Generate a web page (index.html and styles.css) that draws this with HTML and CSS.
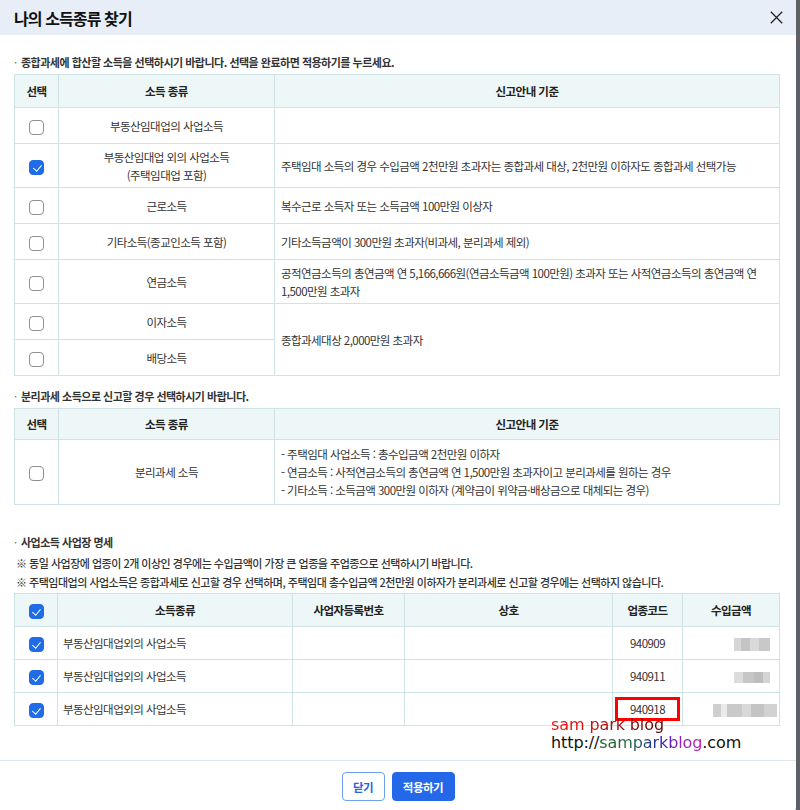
FILE: index.html
```html
<!DOCTYPE html>
<html lang="ko">
<head>
<meta charset="utf-8">
<title>나의 소득종류 찾기</title>
<link rel="stylesheet" href="styles.css">
</head>
<body>
<div class="dialog">
  <div class="dlg-head">
    <h1 class="dlg-title">나의 소득종류 찾기</h1>
    <button class="dlg-close" aria-label="닫기">
      <svg width="13" height="13" viewBox="0 0 13 13"><path d="M0.8 0.8L12.2 12.2M12.2 0.8L0.8 12.2" stroke="#222" stroke-width="1.3" fill="none"/></svg>
    </button>
  </div>

  <div class="dlg-body">
    <p class="sec-title">종합과세에 합산할 소득을 선택하시기 바랍니다. 선택을 완료하면 적용하기를 누르세요.</p>
    <table class="grid t1">
      <colgroup><col class="w-sel"><col class="w-kind"><col class="w-desc"></colgroup>
      <thead>
        <tr><th>선택</th><th>소득 종류</th><th>신고안내 기준</th></tr>
      </thead>
      <tbody>
        <tr><td class="ctr"><span class="cb"></span></td><td class="ctr">부동산임대업의 사업소득</td><td></td></tr>
        <tr><td class="ctr"><span class="cb on"></span></td><td class="ctr">부동산임대업 외의 사업소득<br>(주택임대업 포함)</td><td>주택임대 소득의 경우 수입금액 2천만원 초과자는 종합과세 대상, 2천만원 이하자도 종합과세 선택가능</td></tr>
        <tr><td class="ctr"><span class="cb"></span></td><td class="ctr">근로소득</td><td>복수근로 소득자 또는 소득금액 100만원 이상자</td></tr>
        <tr><td class="ctr"><span class="cb"></span></td><td class="ctr">기타소득(종교인소득 포함)</td><td>기타소득금액이 300만원 초과자(비과세, 분리과세 제외)</td></tr>
        <tr><td class="ctr"><span class="cb"></span></td><td class="ctr">연금소득</td><td>공적연금소득의 총연금액 연 5,166,666원(연금소득금액 100만원) 초과자 또는 사적연금소득의 총연금액 연 1,500만원 초과자</td></tr>
        <tr><td class="ctr"><span class="cb"></span></td><td class="ctr">이자소득</td><td rowspan="2">종합과세대상 2,000만원 초과자</td></tr>
        <tr><td class="ctr"><span class="cb"></span></td><td class="ctr">배당소득</td></tr>
      </tbody>
    </table>

    <p class="sec-title sec-2">분리과세 소득으로 신고할 경우 선택하시기 바랍니다.</p>
    <table class="grid t2">
      <colgroup><col class="w-sel"><col class="w-kind"><col class="w-desc"></colgroup>
      <thead>
        <tr><th>선택</th><th>소득 종류</th><th>신고안내 기준</th></tr>
      </thead>
      <tbody>
        <tr>
          <td class="ctr"><span class="cb"></span></td>
          <td class="ctr">분리과세 소득</td>
          <td>- 주택임대 사업소득 : 총수입금액 2천만원 이하자<br>- 연금소득 : 사적연금소득의 총연금액 연 1,500만원 초과자이고 분리과세를 원하는 경우<br>- 기타소득 : 소득금액 300만원 이하자 (계약금이 위약금·배상금으로 대체되는 경우)</td>
        </tr>
      </tbody>
    </table>

    <p class="sec-title sec-3">사업소득 사업장 명세</p>
    <p class="note note-1">※ 동일 사업장에 업종이 2개 이상인 경우에는 수입금액이 가장 큰 업종을 주업종으로 선택하시기 바랍니다.</p>
    <p class="note">※ 주택임대업의 사업소득은 종합과세로 신고할 경우 선택하며, 주택임대 총수입금액 2천만원 이하자가 분리과세로 신고할 경우에는 선택하지 않습니다.</p>
    <table class="grid t3">
      <colgroup><col class="w3-sel"><col class="w3-kind"><col class="w3-reg"><col class="w3-name"><col class="w3-code"><col class="w3-amt"></colgroup>
      <thead>
        <tr><th><span class="cb on"></span></th><th>소득종류</th><th>사업자등록번호</th><th>상호</th><th>업종코드</th><th>수입금액</th></tr>
      </thead>
      <tbody>
        <tr><td class="ctr"><span class="cb on"></span></td><td>부동산임대업외의 사업소득</td><td></td><td></td><td class="ctr code">940909</td><td class="amt"><span class="blur b1"></span></td></tr>
        <tr><td class="ctr"><span class="cb on"></span></td><td>부동산임대업외의 사업소득</td><td></td><td></td><td class="ctr code">940911</td><td class="amt"><span class="blur b2"></span></td></tr>
        <tr><td class="ctr"><span class="cb on"></span></td><td>부동산임대업외의 사업소득</td><td></td><td></td><td class="ctr code"><span class="mark">940918</span></td><td class="amt"><span class="blur b3"></span></td></tr>
      </tbody>
    </table>
  </div>

  <div class="dlg-foot">
    <button class="btn btn-line">닫기</button>
    <button class="btn btn-fill">적용하기</button>
  </div>

  <div class="wm">
    <div class="wm1"><span class="wm-red">sam park blog</span></div>
    <div class="wm2">http://<span class="wm-grad">samparkblog</span>.com</div>
  </div>
</div>
</body>
</html>
```

FILE: styles.css
```css
* { box-sizing: border-box; }
html, body { margin: 0; padding: 0; }
body {
  width: 800px;
  height: 810px;
  overflow: hidden;
  background: #5d6166;
  font-family: "Noto Sans CJK KR", "Noto Sans", sans-serif;
  color: #333;
}
.dialog {
  position: relative;
  width: 796px;
  height: 830px;
  background: #fff;
  border-bottom-right-radius: 24px;
  display: flex;
  flex-direction: column;
}
.dlg-head {
  height: 35px;
  flex: none;
  background: #e8eef8;
  display: flex;
  align-items: center;
  justify-content: space-between;
  padding: 0 13px 0 14px;
}
.dlg-title {
  margin: 0;
  font-size: 16px;
  font-weight: 700;
  letter-spacing: -0.9px;
  color: #111;
}
.dlg-close {
  border: 0;
  background: none;
  padding: 0;
  display: flex;
}
.dlg-body {
  padding: 18px 17px 34px 14px;
}
.sec-title {
  margin: 0 0 3px;
  font-size: 11px;
  line-height: 18px;
  font-weight: 700;
  letter-spacing: -0.5px;
  color: #333;
}
.sec-title::before {
  content: "·";
  display: inline-block;
  width: 7px;
  font-weight: 400;
  color: #666;
}
.sec-2 { margin-top: 11px; }
.sec-3 { margin-top: 28px; line-height: 19px; margin-bottom: 0; }
.note {
  margin: 0;
  padding-left: 2px;
  font-size: 11px;
  line-height: 19px;
  font-weight: 500;
  letter-spacing: -0.5px;
  color: #333;
}
.note-1 { margin-top: 2px; }
.note + .grid { margin-top: 1px; }

.grid {
  width: 765px;
  border-collapse: collapse;
  table-layout: fixed;
  font-size: 11.5px;
  letter-spacing: -0.55px;
  color: #333;
}
.grid th, .grid td {
  border: 1px solid #cfe3e6;
  padding: 3.5px 6px;
  line-height: 18px;
  vertical-align: middle;
}
.grid th {
  height: 33px;
  background: #eef7f7;
  font-weight: 700;
  color: #222;
  text-align: center;
}
.grid td { height: 36px; text-align: left; }
.grid td.ctr { text-align: center; }
.t2 th { height: 31px; }
.t2 td { padding-top: 5px; padding-bottom: 5px; }
.t3 td { height: 33px; padding: 2px 5px; }
.t3 th { height: 33px; }
.grid td.code { padding-left: 0; padding-right: 0; }
.grid td.amt { text-align: right; padding-right: 2px; }

.w-sel { width: 44px; }
.w-kind { width: 216px; }
.w-desc { width: 505px; }
.w3-sel { width: 43px; }
.w3-kind { width: 235px; }
.w3-reg { width: 112px; }
.w3-name { width: 208px; }
.w3-code { width: 70px; }
.w3-amt { width: 97px; }

.cb {
  display: inline-block;
  width: 15px;
  height: 15px;
  border: 1px solid #8f8f8f;
  border-radius: 4px;
  background: #fff;
  vertical-align: middle;
  position: relative;
}
.cb.on {
  background: #1f6be8;
  border-color: #1f6be8;
}
.cb.on::after {
  content: "";
  position: absolute;
  left: 4.5px;
  top: 2px;
  width: 3.5px;
  height: 7px;
  border-right: 1.6px solid #fff;
  border-bottom: 1.6px solid #fff;
  transform: rotate(40deg);
}

.mark {
  display: inline-block;
  width: 65px;
  height: 24px;
  border: 3px solid #ff0000;
  line-height: 18px;
  text-align: center;
  vertical-align: middle;
}
.blur {
  display: inline-block;
  height: 13px;
  vertical-align: middle;
}
.b1 {
  width: 36px;
  margin-right: 7px;
  background: linear-gradient(90deg, #d6d6d6 0 20%, #c4c4c4 20% 45%, #d9d9d9 45% 70%, #c8c8c8 70%);
}
.b2 {
  width: 36px;
  height: 11px;
  margin-right: 7px;
  background: linear-gradient(90deg, #dcdcdc 0 25%, #c6c6c6 25% 55%, #bdbdbd 55% 80%, #d4d4d4 80%);
}
.b3 {
  width: 64px;
  background: linear-gradient(90deg, #cfcfcf 0 12%, #eaeaea 12% 22%, #c9c9c9 22% 45%, #d8d8d8 45% 60%, #c4c4c4 60% 80%, #d2d2d2 80%);
}

.dlg-foot {
  border-top: 1px solid #dfe7ee;
  display: flex;
  justify-content: center;
  gap: 7px;
  padding: 11px 0;
}
.btn {
  height: 29px;
  border-radius: 4px;
  font-family: "Noto Sans CJK KR", sans-serif;
  font-size: 11.5px;
  font-weight: 700;
  letter-spacing: -0.5px;
  padding: 0;
  cursor: pointer;
}
.btn-line {
  width: 43px;
  background: #fff;
  border: 1px solid #6fa0f0;
  color: #2466d8;
}
.btn-fill {
  width: 63px;
  background: #2368e8;
  border: 1px solid #2368e8;
  color: #fff;
}

.wm {
  position: absolute;
  left: 551px;
  top: 716px;
  font-family: "DejaVu Sans", sans-serif;
  font-size: 16px;
  line-height: 18px;
  letter-spacing: -0.1px;
}
.wm-red {
  background: linear-gradient(90deg, #ff1010 0%, #c01818 35%, #8a1010 65%, #5a0c0c 100%);
  -webkit-background-clip: text;
  background-clip: text;
  color: transparent;
}
.wm2 { color: #111; }
.wm-grad {
  background: linear-gradient(90deg, #1c5e1c 0%, #2a6a4a 30%, #1e3f8a 50%, #3a20b0 62%, #9a20c0 80%, #c020b0 100%);
  -webkit-background-clip: text;
  background-clip: text;
  color: transparent;
}
```
